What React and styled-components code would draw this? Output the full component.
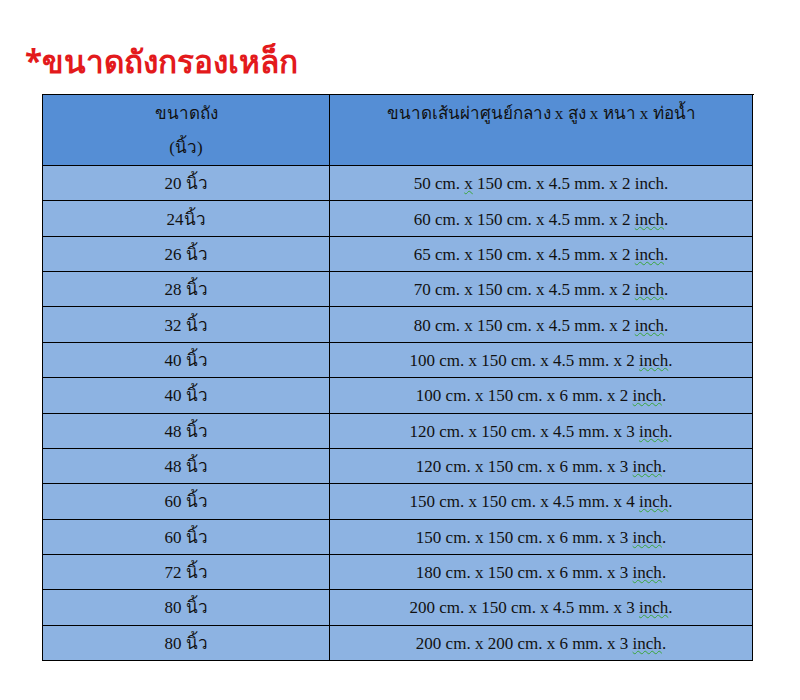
import styled, { createGlobalStyle } from 'styled-components';

const GlobalStyle = createGlobalStyle`
    html, body {
        margin: 0;
        padding: 0;
        background: #ffffff;
    }
`;

// size, text before the marked word, marked word, text after
const rows = [
    ['20 ', '50 cm. ', 'x', ' 150 cm. x 4.5 mm. x 2 inch.'],
    ['24', '60 cm. x 150 cm. x 4.5 mm. x 2 ', 'inch', '.'],
    ['26 ', '65 cm. x 150 cm. x 4.5 mm. x 2 ', 'inch', '.'],
    ['28 ', '70 cm. x 150 cm. x 4.5 mm. x 2 ', 'inch', '.'],
    ['32 ', '80 cm. x 150 cm. x 4.5 mm. x 2 ', 'inch', '.'],
    ['40 ', '100 cm. x 150 cm. x 4.5 mm. x 2 ', 'inch', '.'],
    ['40 ', '100 cm. x 150 cm. x 6 mm. x 2 ', 'inch', '.'],
    ['48 ', '120 cm. x 150 cm. x 4.5 mm. x 3 ', 'inch', '.'],
    ['48 ', '120 cm. x 150 cm. x 6 mm. x 3 ', 'inch', '.'],
    ['60 ', '150 cm. x 150 cm. x 4.5 mm. x 4 ', 'inch', '.'],
    ['60 ', '150 cm. x 150 cm. x 6 mm. x 3 ', 'inch', '.'],
    ['72 ', '180 cm. x 150 cm. x 6 mm. x 3 ', 'inch', '.'],
    ['80 ', '200 cm. x 150 cm. x 4.5 mm. x 3 ', 'inch', '.'],
    ['80 ', '200 cm. x 200 cm. x 6 mm. x 3 ', 'inch', '.'],
];

export default function App() {
    return (
        <>
            <GlobalStyle />
            <Page>
                <Title>*ขนาดถังกรองเหล็ก</Title>
                <Table>
                    <HeadCell>
                        <span>ขนาดถัง</span>
                        <span>(นิ้ว)</span>
                    </HeadCell>
                    <HeadCell>
                        <span>ขนาดเส้นผ่าศูนย์กลาง x สูง x หนา x ท่อน้ำ</span>
                    </HeadCell>
                    {rows.map((row, i) => (
                        <Row key={i}>
                            <Cell>{row[0]}นิ้ว</Cell>
                            <Cell>
                                <span>
                                    {row[1]}
                                    <Squiggle>{row[2]}</Squiggle>
                                    {row[3]}
                                </span>
                            </Cell>
                        </Row>
                    ))}
                </Table>
            </Page>
        </>
    );
}

const Page = styled.div`
    padding: 40px 0 0 42px;
`

const Title = styled.h1`
    margin: 0 0 12px -17px;
    color: #e31a1c;
    font-family: Tahoma, "Noto Sans", sans-serif;
    font-size: 31.5px;
    font-weight: bold;
    line-height: 42px;
    white-space: nowrap;
`

const Table = styled.div`
    display: grid;
    grid-template-columns: 287px 423px;
    width: 711px;
    border-top: 1px solid #000000;
    border-left: 1px solid #000000;
    font-family: "Liberation Serif", "Times New Roman", serif;
    font-size: 17px;
    color: #111111;
`

const Row = styled.div`
    display: contents;
`

const HeadCell = styled.div`
    box-sizing: border-box;
    height: 71px;
    padding-top: 2px;
    display: flex;
    flex-direction: column;
    align-items: center;
    background-color: #558ed5;
    border-right: 1px solid #000000;
    border-bottom: 1px solid #000000;
    line-height: 34px;
    overflow: hidden;
`

const Cell = styled.div`
    box-sizing: border-box;
    height: 35.36px;
    padding-top: 2px;
    display: flex;
    align-items: center;
    justify-content: center;
    background-color: #8db3e2;
    border-right: 1px solid #000000;
    border-bottom: 1px solid #000000;
    line-height: 20px;
    white-space: nowrap;
    overflow: hidden;
`

const Squiggle = styled.span`
    text-decoration: underline wavy #3aa53a;
    text-decoration-thickness: 1px;
    text-underline-offset: 1px;
`
